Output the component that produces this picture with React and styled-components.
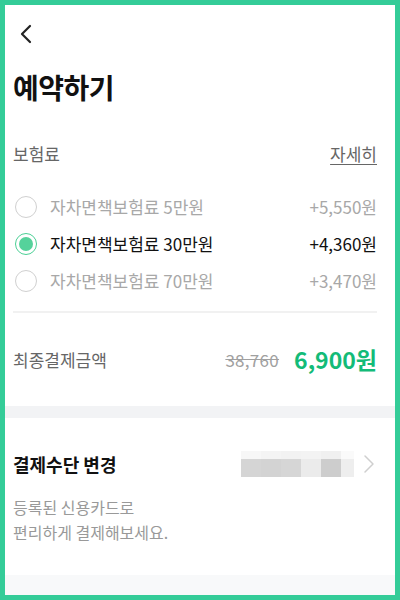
import React, { useState } from "react";
import styled, { createGlobalStyle } from "styled-components";

const Global = createGlobalStyle`
  html, body { margin: 0; padding: 0; background: #fff; }
  * { box-sizing: border-box; }
  body { font-family: "Noto Sans CJK KR", "Noto Sans", sans-serif; }
`;

const Frame = styled.div`
  width: 400px;
  height: 600px;
  border: 5px solid #34cc98;
  background: #fff;
  display: flex;
  flex-direction: column;
  overflow: hidden;
`;

const Header = styled.div`
  height: 56px;
  display: flex;
  align-items: center;
  padding-left: 9px;
  padding-top: 1px;
`;

const BackButton = styled.button`
  width: 24px;
  height: 24px;
  border: 0;
  background: none;
  padding: 0;
  display: flex;
  align-items: center;
  justify-content: center;
`;

const Title = styled.h1`
  margin: 0;
  height: 52px;
  display: flex;
  align-items: center;
  padding-left: 8px;
  font-size: 28px;
  font-weight: 700;
  color: #111;
  letter-spacing: -0.5px;
`;

const Section = styled.div`
  padding: 20px 18px 0 8px;
`;

const SectionHead = styled.div`
  height: 40px;
  display: flex;
  align-items: center;
  justify-content: space-between;
  font-size: 17px;
  color: #666;
`;

const DetailLink = styled.a`
  color: #666;
  font-size: 17px;
  text-decoration: underline;
  text-underline-offset: 3px;
  text-decoration-thickness: 1px;
`;

const OptionList = styled.div`
  margin-top: 15px;
  display: flex;
  flex-direction: column;
`;

const OptionRow = styled.label`
  height: 37px;
  display: flex;
  align-items: center;
  font-size: 17px;
  color: ${(p) => (p.$active ? "#111" : "#a8a8a8")};
  cursor: pointer;
`;

const Radio = styled.span`
  width: 22px;
  height: 22px;
  margin-left: 2px;
  border-radius: 50%;
  border: 1.5px solid ${(p) => (p.$active ? "#4bd095" : "#d0d0d0")};
  display: flex;
  align-items: center;
  justify-content: center;
  flex-shrink: 0;
  &::after {
    content: "";
    width: 14px;
    height: 14px;
    border-radius: 50%;
    background: #55d29b;
    display: ${(p) => (p.$active ? "block" : "none")};
  }
`;

const OptionLabel = styled.span`
  margin-left: 13px;
  flex: 1;
`;

const OptionPrice = styled.span``;

const Divider = styled.div`
  height: 1.5px;
  background: #f1f1f1;
  margin-top: 12px;
`;

const TotalRow = styled.div`
  height: 93px;
  display: flex;
  align-items: center;
  font-size: 17px;
  color: #666;
`;

const TotalLabel = styled.span`
  flex: 1;
`;

const OldPrice = styled.span`
  color: #a0a0a0;
  font-size: 17px;
  letter-spacing: 0.3px;
  text-decoration: line-through;
  margin-right: 15px;
`;

const FinalPrice = styled.span`
  color: #13bb78;
  font-size: 23px;
  font-weight: 700;
`;

const Band = styled.div`
  height: 12px;
  background: #f2f3f5;
  flex-shrink: 0;
`;

const PaySection = styled.div`
  padding: 0 18px 0 8px;
  flex: 1;
`;

const PayHead = styled.div`
  height: 56px;
  margin-top: 18px;
  display: flex;
  align-items: center;
`;

const PayTitle = styled.span`
  flex: 1;
  font-size: 18px;
  font-weight: 700;
  color: #111;
`;

const PayDesc = styled.p`
  margin: 3px 0 0;
  font-size: 16px;
  line-height: 25px;
  color: #999;
`;

const BottomBand = styled.div`
  height: 20px;
  background: #f8f9fa;
  flex-shrink: 0;
`;

const blocks = [
  ["#f7f7f7", "#d5d5d5"],
  ["#f4f4f4", "#d3d3d3"],
  ["#f2f2f2", "#d6d6d6"],
  ["#f3f3f3", "#ebebeb"],
  ["#f0f0f0", "#cdcdcd"],
  ["#fafafa", "#eeeeee"],
];

function BlurredCard() {
  return (
    <svg width="113" height="26" viewBox="0 0 113 26" style={{ display: "block" }}>
      {blocks.map(([top, bottom], i) => (
        <g key={i}>
          <rect x={i * 20} y="0" width={i === 5 ? 13 : 20} height="8" fill={top} />
          <rect x={i * 20} y="8" width={i === 5 ? 13 : 20} height="18" fill={bottom} />
        </g>
      ))}
    </svg>
  );
}

const options = [
  { label: "자차면책보험료 5만원", price: "+5,550원" },
  { label: "자차면책보험료 30만원", price: "+4,360원" },
  { label: "자차면책보험료 70만원", price: "+3,470원" },
];

export default function App() {
  const [selected, setSelected] = useState(1);
  return (
    <>
      <Global />
      <Frame>
        <Header>
          <BackButton aria-label="뒤로">
            <svg width="14" height="20" viewBox="0 0 14 20">
              <path d="M11 2 L3 10 L11 18" fill="none" stroke="#222" strokeWidth="2.2" strokeLinecap="round" strokeLinejoin="round" />
            </svg>
          </BackButton>
        </Header>
        <Title>예약하기</Title>
        <Section>
          <SectionHead>
            <span>보험료</span>
            <DetailLink>자세히</DetailLink>
          </SectionHead>
          <OptionList>
            {options.map((o, i) => (
              <OptionRow key={o.label} $active={i === selected} onClick={() => setSelected(i)}>
                <Radio $active={i === selected} />
                <OptionLabel>{o.label}</OptionLabel>
                <OptionPrice>{o.price}</OptionPrice>
              </OptionRow>
            ))}
          </OptionList>
          <Divider />
          <TotalRow>
            <TotalLabel>최종결제금액</TotalLabel>
            <OldPrice>38,760</OldPrice>
            <FinalPrice>6,900원</FinalPrice>
          </TotalRow>
        </Section>
        <Band />
        <PaySection>
          <PayHead>
            <PayTitle>결제수단 변경</PayTitle>
            <BlurredCard />
            <svg width="12" height="20" viewBox="0 0 12 20" style={{ marginLeft: 9, marginRight: 2 }}>
              <path d="M2 2 L10 10 L2 18" fill="none" stroke="#cfcfcf" strokeWidth="1.5" strokeLinecap="round" strokeLinejoin="round" />
            </svg>
          </PayHead>
          <PayDesc>
            등록된 신용카드로
            <br />
            편리하게 결제해보세요.
          </PayDesc>
        </PaySection>
        <BottomBand />
      </Frame>
    </>
  );
}
